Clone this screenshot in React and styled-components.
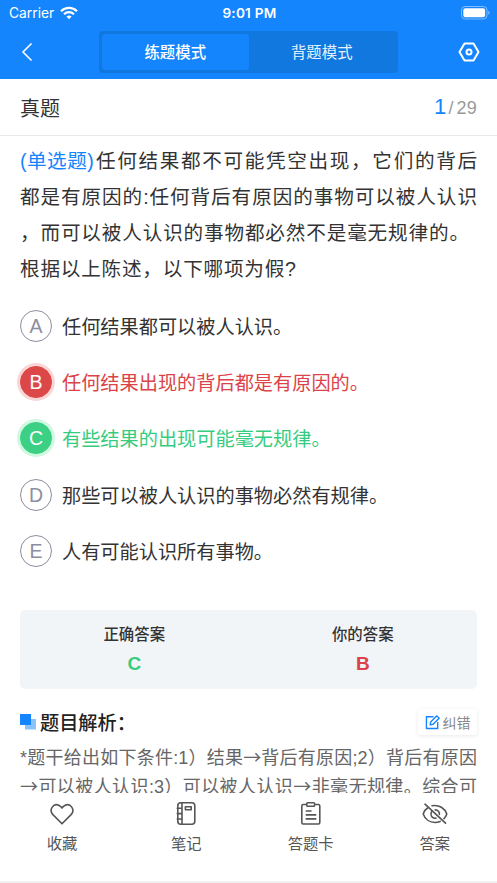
import React from "react";
import styled, { createGlobalStyle, css } from "styled-components";

const cjk = '"Noto Sans CJK SC", sans-serif';

const GlobalStyle = createGlobalStyle`
  * { box-sizing: border-box; }
  body {
    margin: 0;
    background: #fff;
    font-family: "Liberation Sans", ${cjk};
    color: #333;
  }
`;

const Screen = styled.div`
  width: 497px;
  height: 883px;
  display: flex;
  flex-direction: column;
  overflow: hidden;
  background: #fff;
`;

const Header = styled.header`
  height: 79px;
  flex: none;
  background: #1485fc;
  color: #fff;
`;

const StatusBar = styled.div`
  height: 26px;
  padding: 0 7px 0 9px;
  display: grid;
  grid-template-columns: 1fr auto 1fr;
  align-items: center;
  font-family: Inter, sans-serif;
  font-size: 13.8px;
  line-height: 26px;
`;

const Carrier = styled.div`
  display: flex;
  align-items: center;
  gap: 6px;
`;

const Clock = styled.div`
  font-weight: 600;
  font-size: 13.6px;
  letter-spacing: 0.25px;
`;

const BatteryWrap = styled.div`
  display: flex;
  justify-content: flex-end;
`;

const NavBar = styled.nav`
  height: 53px;
  padding: 5px 17px 6px 20px;
  display: grid;
  grid-template-columns: 79px 299px 1fr;
  align-items: center;
`;

const Segmented = styled.div`
  height: 42px;
  padding: 3px;
  display: flex;
  border-radius: 4px;
  background: #1078de;
`;

const Segment = styled.button`
  flex: 1;
  padding: 0;
  border: 0;
  border-radius: 4px;
  background: ${(p) => (p.$active ? "#1485fc" : "transparent")};
  color: ${(p) => (p.$active ? "#fff" : "#e4f1ff")};
  font: ${(p) => (p.$active ? 500 : 400)} 15.4px/34px ${cjk};
  padding-bottom: 2px;
`;

const IconButton = styled.button`
  display: flex;
  justify-self: ${(p) => (p.$end ? "end" : "start")};
  padding: 0;
  border: 0;
  background: none;
  color: inherit;
`;

const TitleRow = styled.div`
  height: 57px;
  flex: none;
  padding: 0 20px;
  display: flex;
  align-items: center;
  justify-content: space-between;
  border-bottom: 1px solid #e9e9e9;
  font-size: 20px;
`;

const Counter = styled.div`
  display: flex;
  align-items: baseline;
  color: #999;
  font-size: 18px;
  letter-spacing: 0.2px;
`;

const Current = styled.span`
  margin-right: 2px;
  color: #1485fc;
  font-size: 22px;
`;

const Slash = styled.span`
  margin-right: 3px;
`;

const Content = styled.main`
  height: 657px;
  flex: none;
  padding: 7px 20px 0;
  overflow: hidden;
`;

const Question = styled.div`
  height: 155px;
  font-size: 19.6px;
`;

const Line = styled.div`
  width: ${(p) => p.$width}px;
  height: ${(p) => p.$height || 36}px;
  line-height: ${(p) => p.$height || 36}px;
  white-space: nowrap;
  text-align: justify;
  text-align-last: justify;
`;

const QuestionStart = styled.div`
  display: flex;
  justify-content: space-between;
`;

const Kind = styled.span`
  color: #1485fc;
  line-height: 36px;
  letter-spacing: 0.5px;
`;

const Options = styled.div`
  display: grid;
  grid-auto-rows: 56.2px;
  height: 305px;
`;

const optionStates = {
  wrong: css`
    background: #dc4748;
    border-color: #dc4748;
    color: #fff;
    box-shadow: 0 0 0 3px #fad6d6;
  `,
  right: css`
    background: #3bd083;
    border-color: #3bd083;
    color: #fff;
    box-shadow: 0 0 0 3px #cff8e0;
  `,
};

const optionColors = { wrong: "#dc4348", right: "#36cc7f" };

const Option = styled.div`
  display: flex;
  align-items: center;
  gap: 10px;
  color: ${(p) => optionColors[p.$state] || "#333"};
  font-size: 19.2px;
`;

const Letter = styled.span`
  width: 32px;
  height: 32px;
  flex: none;
  border: 1px solid #8d8da0;
  border-radius: 50%;
  color: #8d8da0;
  font-size: 19.5px;
  line-height: 31px;
  text-align: center;
  ${(p) => optionStates[p.$state]}
`;

const AnswerPanel = styled.section`
  height: 79px;
  margin-top: 7px;
  padding-top: 9px;
  display: grid;
  grid-template-columns: 1fr 1fr;
  border-radius: 5px;
  background: #f2f5f8;
  text-align: center;
`;

const AnswerLabel = styled.div`
  height: 29px;
  font: 500 15.4px/28px ${cjk};
`;

const AnswerValue = styled.div`
  font-size: 19px;
  font-weight: 700;
  line-height: 32px;
  color: ${(p) => p.$color};
`;

const AnalysisHead = styled.div`
  height: 26px;
  margin-top: 20px;
  display: flex;
  align-items: center;
  justify-content: space-between;
`;

const AnalysisTitle = styled.h2`
  margin: 0;
  display: flex;
  align-items: center;
  gap: 4px;
  font: 500 19.2px/26px ${cjk};
  color: #222;
`;

const Report = styled.button`
  width: 59px;
  height: 26px;
  padding: 0;
  display: flex;
  align-items: center;
  justify-content: center;
  gap: 3px;
  border: 0;
  border-radius: 3px;
  background: #fff;
  box-shadow: 0 1px 4px rgba(0, 0, 0, 0.09);
  color: #888;
  font: 400 14px/24px ${cjk};
`;

const Analysis = styled.div`
  margin-top: 7px;
  color: #666;
  font-size: 18px;
`;

const Arrow = styled.span`
  font-family: ${cjk};
`;

const TabBar = styled.footer`
  flex: 1;
  padding-top: 8px;
  display: grid;
  grid-template-columns: repeat(4, 1fr);
  background: #fff;
  border-bottom: 2px solid #f1f1f1;
`;

const Tab = styled.div`
  display: flex;
  flex-direction: column;
  align-items: center;
  gap: 4px;
  color: #555;
  font-size: 15.3px;
  line-height: 26px;
`;

const Icon = ({ size = 26, width = 1.6, children, ...rest }) => (
  <svg
    width={size}
    height={size}
    viewBox="0 0 26 26"
    fill="none"
    stroke="currentColor"
    strokeWidth={width}
    strokeLinecap="round"
    strokeLinejoin="round"
    {...rest}
  >
    {children}
  </svg>
);

const Wifi = () => (
  <svg width="18" height="14" viewBox="0 0 18 14" fill="none" stroke="#fff" strokeWidth="2.2">
    <path d="M1 5.2C5.5.8 12.5.8 17 5.2" />
    <path d="M4 8.2c2.8-2.7 7.2-2.7 10 0" />
    <path d="M6.4 10.6c1.5-1.4 3.7-1.4 5.2 0L9 13.3z" fill="#fff" stroke="none" />
  </svg>
);

const Battery = () => (
  <svg width="29" height="14" viewBox="0 0 29 14">
    <rect x=".5" y=".5" width="25.5" height="12.5" rx="3.6" fill="none" stroke="#fff" strokeOpacity=".45" />
    <rect x="2.3" y="2.3" width="21.8" height="9" rx="2" fill="#fff" />
    <path d="M27.3 4.8c1.7.7 1.7 3.3 0 4z" fill="#fff" fillOpacity=".5" />
  </svg>
);

const tabs = [
  {
    label: "收藏",
    icon: <path d="M13 22.8 3.900 13.600C-.6 8.800 4.600 1.400 10.200 4.500 11.500 5.200 12.300 5.900 13 7c.7-1.100 1.500-1.800 2.800-2.500 5.600-3.100 10.800 4.300 6.300 9.100z" />,
  },
  {
    label: "笔记",
    icon: (
      <>
        <rect x="4.8" y="1.800" width="17" height="21.500" rx="3" />
        <path d="M9 2v21M4.300 7.300H9M4.300 12.600H9M4.300 18H9" />
        <rect x="12.400" y="5.800" width="5.800" height="3" />
      </>
    ),
  },
  {
    label: "答题卡",
    icon: (
      <>
        <path d="M8 3.500H5.200Q3.800 3.500 3.800 5v16.500q0 1.500 1.400 1.500h15.200q1.400 0 1.400-1.500V5q0-1.500-1.400-1.500h-2.600" />
        <rect x="8.800" y="1.800" width="7.800" height="3.400" rx=".8" />
        <path d="M8.300 10h4.700M8.300 13.900h9.400M8.300 17.900h9.400" />
      </>
    ),
  },
  {
    label: "答案",
    icon: (
      <>
        <path d="M6.500 6.300C4 7.800 2.200 10 1.200 13c1.800 5.200 6.500 8.500 11.800 8.500 1.800 0 3.500-.4 5.100-1.100M10 4.700C17.300 3.400 22.800 7.400 24.800 13c-.6 1.800-1.600 3.400-2.900 4.700M3 3.200l20.500 19" />
        <path d="M9.500 10.800c-1.900 3.300.8 7 4.400 6.300M13.200 8.900c2.700.1 4.500 2.100 4.200 4.500" />
      </>
    ),
  },
];

const options = [
  { letter: "A", text: "任何结果都可以被人认识。" },
  { letter: "B", text: "任何结果出现的背后都是有原因的。", state: "wrong" },
  { letter: "C", text: "有些结果的出现可能毫无规律。", state: "right" },
  { letter: "D", text: "那些可以被人认识的事物必然有规律。" },
  { letter: "E", text: "人有可能认识所有事物。" },
];

export default function App() {
  return (
    <Screen>
      <GlobalStyle />
      <Header>
        <StatusBar>
          <Carrier>
            Carrier <Wifi />
          </Carrier>
          <Clock>9:01 PM</Clock>
          <BatteryWrap>
            <Battery />
          </BatteryWrap>
        </StatusBar>
        <NavBar>
          <IconButton aria-label="返回">
            <svg width="14" height="20" viewBox="0 0 14 20" fill="none" stroke="currentColor" strokeWidth="1.6">
              <path d="M11.5 1.5 3 10l8.500 8.500" />
            </svg>
          </IconButton>
          <Segmented>
            <Segment $active>练题模式</Segment>
            <Segment>背题模式</Segment>
          </Segmented>
          <IconButton $end aria-label="设置">
            <svg width="22" height="20" viewBox="0 0 22 20" fill="none" stroke="currentColor" strokeWidth="2" strokeLinejoin="round">
              <path d="M6.500 1.400h9L20.500 10l-5 8.600h-9L1.500 10z" />
              <circle cx="11" cy="10" r="2.500" />
            </svg>
          </IconButton>
        </NavBar>
      </Header>

      <TitleRow>
        <span>真题</span>
        <Counter>
          <Current>1</Current>
          <Slash>/</Slash>29
        </Counter>
      </TitleRow>

      <Content>
        <Question>
          <QuestionStart>
            <Kind>(单选题)</Kind>
            <Line $width={381}>任何结果都不可能凭空出现，它们的背后</Line>
          </QuestionStart>
          <Line $width={457}>都是有原因的:任何背后有原因的事物可以被人认识</Line>
          <Line $width={449}>，而可以被人认识的事物都必然不是毫无规律的。</Line>
          <Line $width={276}>根据以上陈述，以下哪项为假?</Line>
        </Question>

        <Options>
          {options.map((o) => (
            <Option key={o.letter} $state={o.state}>
              <Letter $state={o.state}>{o.letter}</Letter>
              <span>{o.text}</span>
            </Option>
          ))}
        </Options>

        <AnswerPanel>
          <div>
            <AnswerLabel>正确答案</AnswerLabel>
            <AnswerValue $color="#36cc7f">C</AnswerValue>
          </div>
          <div>
            <AnswerLabel>你的答案</AnswerLabel>
            <AnswerValue $color="#dc4348">B</AnswerValue>
          </div>
        </AnswerPanel>

        <AnalysisHead>
          <AnalysisTitle>
            <svg width="16" height="16" viewBox="0 0 16 16">
              <rect x="5" y="5" width="11" height="10.500" fill="#8ac3fb" />
              <rect width="11" height="11" fill="#1485fc" />
            </svg>
            题目解析：
          </AnalysisTitle>
          <Report>
            <Icon size={15} width={2.4} color="#1485fc">
              <path d="M14 3H2.500v20.500H22V13" />
              <path d="m9 17 .8-5L20.500 1.500l4 4L14 16z" />
            </Icon>
            纠错
          </Report>
        </AnalysisHead>
        <Analysis>
          <Line $width={457} $height={28.500}>
            *题干给出如下条件:1）结果<Arrow>→</Arrow>背后有原因;2）背后有原因
          </Line>
          <Line $width={457} $height={28.500}>
            <Arrow>→</Arrow>可以被人认识:3）可以被人认识<Arrow>→</Arrow>非毫无规律。综合可
          </Line>
        </Analysis>
      </Content>

      <TabBar>
        {tabs.map((t) => (
          <Tab key={t.label}>
            <Icon>{t.icon}</Icon>
            <span>{t.label}</span>
          </Tab>
        ))}
      </TabBar>
    </Screen>
  );
}
